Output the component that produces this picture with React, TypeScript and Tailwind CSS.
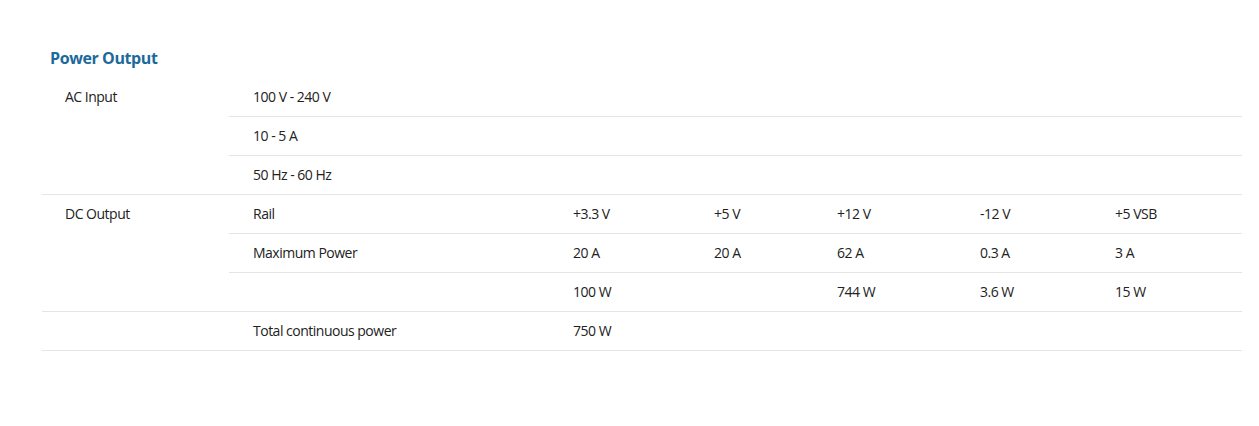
import React from "react";

type Row = { cells: string[] };

const acRows: Row[] = [
  { cells: ["100 V - 240 V"] },
  { cells: ["10 - 5 A"] },
  { cells: ["50 Hz - 60 Hz"] },
];

const dcRows: Row[] = [
  { cells: ["Rail", "+3.3 V", "+5 V", "+12 V", "-12 V", "+5 VSB"] },
  { cells: ["Maximum Power", "20 A", "20 A", "62 A", "0.3 A", "3 A"] },
  { cells: ["", "100 W", "", "744 W", "3.6 W", "15 W"] },
];

const td = "border-b border-[#e5e5e5] px-6 py-[9px] leading-[20px] align-top";

export default function App() {
  return (
    <div
      className="min-h-[426px] bg-white pt-[47px] pl-[42px] pr-[17px] text-[14px] text-[#222] tracking-[-0.5px]"
      style={{ fontFamily: '"Open Sans", "Noto Sans", sans-serif' }}
    >
      <h2 className="pl-2 mb-[9px] text-[16px] leading-[22px] font-bold text-[#1b6a9b] tracking-[-0.4px]">
        Power Output
      </h2>
      <table className="w-full table-fixed border-separate border-spacing-0">
        <colgroup>
          <col className="w-[187px]" />
          <col className="w-[320px]" />
          <col className="w-[141px]" />
          <col className="w-[123px]" />
          <col className="w-[143px]" />
          <col className="w-[135px]" />
          <col className="w-[151px]" />
        </colgroup>
        <tbody>
          {acRows.map((row, i) => (
            <tr key={"ac" + i}>
              {i === 0 && (
                <td rowSpan={3} className={td + " pl-[23px]"}>
                  AC Input
                </td>
              )}
              <td colSpan={6} className={td}>
                {row.cells[0]}
              </td>
            </tr>
          ))}
          {dcRows.map((row, i) => (
            <tr key={"dc" + i}>
              {i === 0 && (
                <td rowSpan={3} className={td + " pl-[23px]"}>
                  DC Output
                </td>
              )}
              {row.cells.map((c, j) => (
                <td key={j} className={td}>
                  {c}
                </td>
              ))}
            </tr>
          ))}
          <tr>
            <td className={td}></td>
            <td className={td}>Total continuous power</td>
            <td className={td}>750 W</td>
            <td colSpan={4} className={td}></td>
          </tr>
        </tbody>
      </table>
    </div>
  );
}
